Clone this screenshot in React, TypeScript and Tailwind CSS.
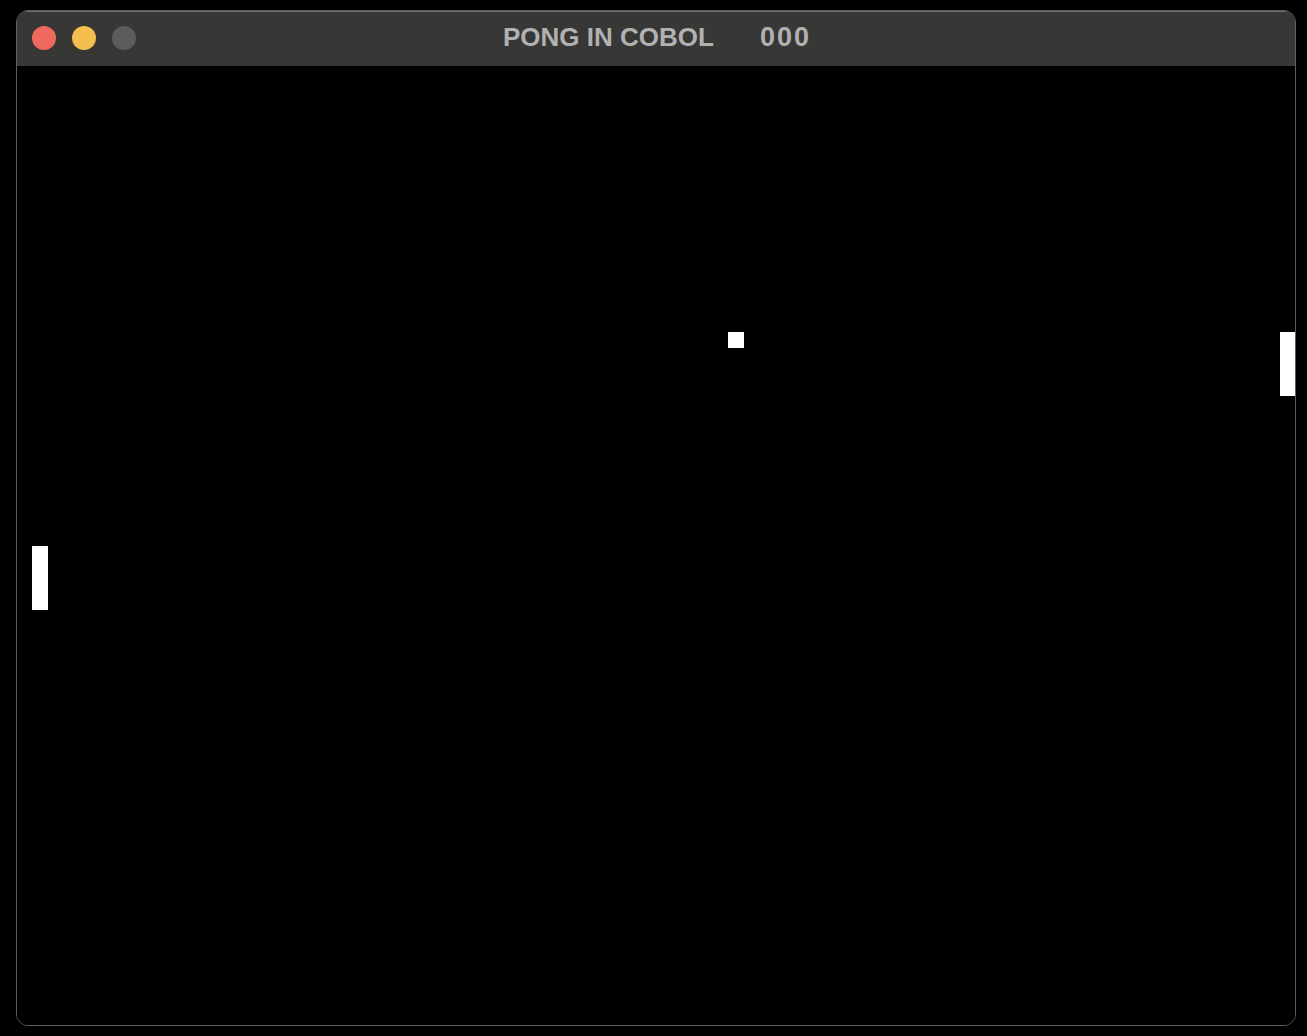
export default function App() {
  return (
    <div className="min-h-screen w-full bg-black pl-[16px] pt-[10px]" style={{ fontFamily: '"Liberation Sans", Arial, sans-serif' }}>
      <div className="flex h-[1016px] w-[1280px] flex-col overflow-hidden rounded-[12px] border border-[#5e5e5e]">
        {/* Title bar */}
        <div className="relative flex h-[55px] shrink-0 items-center border-t border-[#6e6e6e] bg-[#373735] pb-[4px]">
          <div className="absolute left-[15px] top-[14px] flex gap-[16px]">
            <span className="h-[24px] w-[24px] rounded-full bg-[#ee6a5e]" />
            <span className="h-[24px] w-[24px] rounded-full bg-[#f5bf4f]" />
            <span className="h-[24px] w-[24px] rounded-full bg-[#5c5c5b]" />
          </div>
          <div className="flex w-full justify-center gap-[46px] text-[26px] font-bold leading-none text-[#b1b1b1]">
            <span>PONG IN COBOL</span>
            <span className="-mr-[2px] text-[27px] tracking-[2px]">000</span>
          </div>
        </div>

        {/* Playfield */}
        <div className="relative flex-1 bg-black">
          <div className="absolute left-[15px] top-[480px] h-[64px] w-[16px] bg-white" />
          <div className="absolute left-[711px] top-[266px] h-[16px] w-[16px] bg-white" />
          <div className="absolute left-[1263px] top-[266px] h-[64px] w-[16px] bg-white" />
        </div>
      </div>
    </div>
  );
}
